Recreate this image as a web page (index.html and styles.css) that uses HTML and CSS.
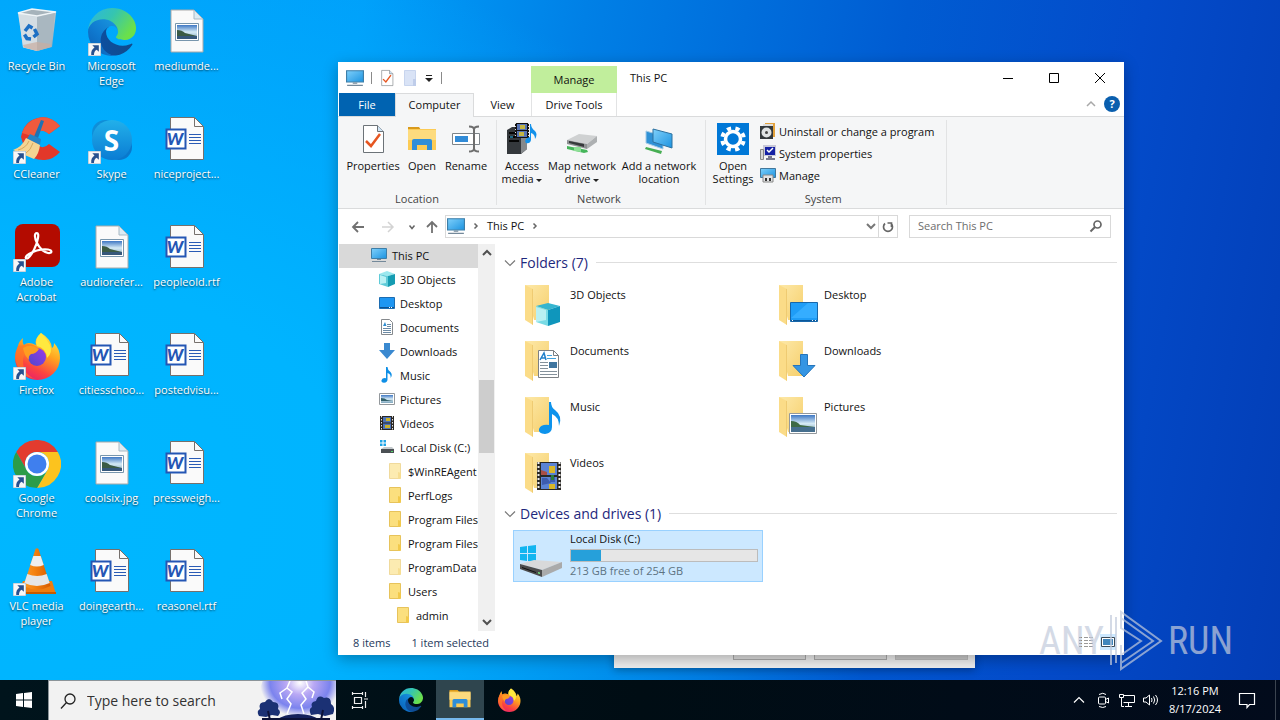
FILE: index.html
```html
<!DOCTYPE html>
<html lang="en">

<head>
  <meta charset="UTF-8">
  <meta name="viewport" content="width=device-width, initial-scale=1.0">
  <title>This PC</title>
  <link rel="stylesheet" href="styles.css">
</head>

<body>
  <!-- Icon definitions -->
  <svg class="defs" width="0" height="0" aria-hidden="true">
    <defs>
      <linearGradient id="gScreen" x1="0" y1="0" x2="1" y2="1">
        <stop offset="0" stop-color="#7fd0fb" /><stop offset="1" stop-color="#1c93e0" />
      </linearGradient>
      <linearGradient id="gFolder" x1="0" y1="0" x2="1" y2="1">
        <stop offset="0" stop-color="#fde9a9" /><stop offset="1" stop-color="#f6cf6c" />
      </linearGradient>
      <linearGradient id="gPhoto" x1="0" y1="0" x2="0" y2="1">
        <stop offset="0" stop-color="#3f78c4" /><stop offset=".5" stop-color="#d5eaf5" /><stop offset="1" stop-color="#7fa6bd" />
      </linearGradient>
      <linearGradient id="gEdge1" x1="0" y1="0" x2="1" y2="0">
        <stop offset="0" stop-color="#0c4fa0" /><stop offset="1" stop-color="#114a8b" />
      </linearGradient>
      <linearGradient id="gEdge2" x1="1" y1="0" x2=".2" y2="1">
        <stop offset="0" stop-color="#1b9de2" /><stop offset=".6" stop-color="#0f79cf" /><stop offset="1" stop-color="#0c62b8" />
      </linearGradient>
      <linearGradient id="gEdge3" x1="0" y1="0" x2="1" y2=".5">
        <stop offset="0" stop-color="#2bb5e3" /><stop offset=".5" stop-color="#35c5b0" /><stop offset="1" stop-color="#6be04a" />
      </linearGradient>
      <linearGradient id="gFox" x1=".8" y1="0" x2=".3" y2="1">
        <stop offset="0" stop-color="#fff04a" /><stop offset=".4" stop-color="#ffa51f" /><stop offset=".75" stop-color="#fb4440" /><stop offset="1" stop-color="#e81e6e" />
      </linearGradient>
      <linearGradient id="gGlobe" x1="0" y1="1" x2="1" y2="0">
        <stop offset="0" stop-color="#4d48c9" /><stop offset="1" stop-color="#9a3be8" />
      </linearGradient>
      <linearGradient id="gSkype" x1="0" y1="0" x2="0" y2="1">
        <stop offset="0" stop-color="#22b0ea" /><stop offset="1" stop-color="#0a7cd3" />
      </linearGradient>
      <linearGradient id="gCone" x1="0" y1="0" x2="1" y2="0">
        <stop offset="0" stop-color="#f99a2b" /><stop offset=".4" stop-color="#f5820f" /><stop offset="1" stop-color="#d65c00" />
      </linearGradient>
      <linearGradient id="gBin" x1="0" y1="0" x2="1" y2="1">
        <stop offset="0" stop-color="#dfe7ec" /><stop offset="1" stop-color="#97a8b3" />
      </linearGradient>
      <radialGradient id="gStorm" cx=".5" cy=".35" r=".5">
        <stop offset="0" stop-color="#ffffff" /><stop offset=".35" stop-color="#b9a8f4" /><stop offset=".75" stop-color="#7b83ee" /><stop offset="1" stop-color="#7b83ee" stop-opacity="0" />
      </radialGradient>
    </defs>

    <symbol id="shortcut" viewBox="0 0 12 12">
      <path d="M0 0h12v12H0z" fill="#f7f7f7" stroke="#9db6c9" />
      <path d="M4 2h6v6L8 6.200Q5.500 7.500 5.500 11H3Q2.500 6.500 6 4.200z" fill="#27508f" />
    </symbol>

    <symbol id="bin" viewBox="0 0 48 48">
      <path d="M5 5l14-3 24 3-4 34-15 4-14-4z" fill="url(#gBin)" />
      <path d="M5 5l19 3 19-4-24-3z" fill="#a6b3bb" stroke="#eff4f7" stroke-width="1.500" />
      <path d="M6 7l18 2v34l-14-3.500z" fill="#d4dde3" />
      <path d="M24 9l18-4-4 34-14 4z" fill="#a9b7c0" />
      <path d="M10 37l14-3 14 2-1 3-13 4-13-3.500z" fill="#c9aca0" opacity=".7" />
      <path d="M12 23l4-5 3.500 2M21.500 21l2.500 5-3.500 3M18 31l-4-.5-2.500-4" fill="none" stroke="#1c6fc4" stroke-width="3.500" />
    </symbol>

    <symbol id="edge" viewBox="0 0 256 256">
      <path fill="url(#gEdge1)" d="M231 190.500c-3.400 1.800-6.900 3.400-10.500 4.700a101.500 101.500 0 0 1-35.900 6.400c-47.300 0-88.500-32.500-88.500-74.300a31.500 31.500 0 0 1 16.400-27.300c-42.800 1.800-53.800 46.400-53.800 72.500 0 73.900 68.100 81.400 82.800 81.400 7.900 0 19.800-2.300 27-4.600l1.300-.4a128.300 128.300 0 0 0 66.600-52.800 4 4 0 0 0-5.400-5.600z" />
      <path fill="url(#gEdge2)" d="M105.700 241.400a79.200 79.200 0 0 1-22.700-21.300 80.700 80.700 0 0 1 29.500-120c3.200-1.500 8.500-4.100 15.600-4a32.400 32.400 0 0 1 25.700 13 31.900 31.900 0 0 1 6.300 18.700c0-.2 24.500-79.600-80-79.600-43.900 0-80 41.600-80 78.200a130.200 130.200 0 0 0 12.100 56 128 128 0 0 0 156.400 67 75.500 75.500 0 0 1-62.800-8z" />
      <path fill="url(#gEdge3)" d="M152.300 148.900c-.9 1-3.300 2.500-3.300 5.700 0 2.600 1.700 5.200 4.800 7.300 14.400 10 41.500 8.700 41.600 8.700a59.600 59.600 0 0 0 30.300-8.400 61.400 61.400 0 0 0 30.400-52.900c.3-22.400-8-37.300-11.300-43.900C223.500 23.900 177.700 0 128 0A128 128 0 0 0 0 126.200c.5-36.500 36.800-66 80-66 3.500 0 23.500.3 42 10 16.300 8.600 24.900 19 30.800 29.200 6.200 10.700 7.300 24.100 7.300 29.500 0 5.300-2.700 13.300-7.800 20z" />
    </symbol>

    <symbol id="imagefile" viewBox="0 0 48 48">
      <path d="M8 2h23l9 9v33H8z" fill="#fafafa" stroke="#a9a9a9" />
      <path d="M31 2v9h9z" fill="#dcebf3" stroke="#a9b9c4" />
      <path d="M12.500 15.500h23v17h-23z" fill="#fff" stroke="#7896ad" />
      <path d="M14 17h20v14H14z" fill="url(#gPhoto)" />
      <path d="M14 22q5 0 8 3l12 3H14z" fill="#3b5b45" />
      <path d="M14 28h20v3H14z" fill="#36577a" />
    </symbol>

    <symbol id="wordfile" viewBox="0 0 48 48">
      <path d="M7.500 1.500h24l9 9v33h-33z" fill="#fafafa" stroke="#76706c" />
      <path d="M31.500 1.500v9h9" fill="none" stroke="#76706c" />
      <path d="M26 18.500h12M26 21.500h12M26 24.500h12M26 27.500h12" stroke="#2a5bb5" />
      <path d="M3.500 13.500h19v19h-19z" fill="#fff" stroke="#2456b4" stroke-width="2" />
    </symbol>

    <symbol id="ccleaner" viewBox="0 0 48 48">
      <path d="M47 10Q37-1 25 2 11 5 8 21L12 34q8 11 20 10 9-1 15-8L36 28q-5 5-10 2-6-6-3-12 5-7 13 0z" fill="#e2382a" />
      <path d="M47 10Q37-1 25 2 13 5 9 17l13 4q5-11 14-3z" fill="#f05a3d" />
      <path d="M28 4l3 1-7 20-4-2z" fill="#1f72b4" />
      <path d="M17 18l11 5-1 6-13-6z" fill="#2684c6" />
      <path d="M13 22l14 7q-1 9-6 14L0 34q9-3 13-12z" fill="#f4d493" />
      <path d="M5 34q8-2 11-9M12 38q6-4 8-11" stroke="#d6a75d" fill="none" />
    </symbol>

    <symbol id="skype" viewBox="0 0 48 48">
      <circle cx="17" cy="17" r="13" fill="#0f8ed8" />
      <circle cx="31" cy="31" r="13" fill="#0a78cc" />
      <circle cx="24" cy="24" r="20" fill="url(#gSkype)" />
    </symbol>

    <symbol id="acrobat" viewBox="0 0 48 48">
      <rect x="2" y="0" width="45" height="43" rx="8" fill="#b30b00" />
      <path d="M24 9c-3 0-2.500 5 0 10 2.500 5 7 9 11 10 4 .8 5-3 0-3.500-6-.6-14 1.500-19 4.500-5 3-3.500 5.500-1 4 4-3 9-13 10-20 .6-3.500 0-5-1-5z" fill="none" stroke="#fff" stroke-width="2.200" />
    </symbol>

    <symbol id="firefox" viewBox="0 0 48 48">
      <path d="M28 1q-7 6-5 12-8-4-12 0-2-2-1-7-4 3-5 8-3 6-3 12a22.500 22 0 0 0 45 0q0-9-6-15 0 4-2 5Q38 7 28 1z" fill="url(#gFox)" />
      <path d="M5 14q-3 7-3 12 3 18 20 21-12-5-12-18 0-6 4-9h7q2-4 4-4-7-6-14-3z" fill="#ff7a22" opacity=".7" />
      <circle cx="24" cy="25" r="9" fill="url(#gGlobe)" />
      <path d="M10 16q8-5 16 1-3 5-8 5-3 2-2 6-5-5-6-12z" fill="#ff9d20" />
      <path d="M28 1q-7 6-4 13 9 2 10 12 6-5 3-13-3-6-9-12z" fill="#ffe93f" />
    </symbol>

    <symbol id="chrome" viewBox="0 0 48 48">
      <path d="M24 12h20.800A24 24 0 0 0 3.200 12l10.400 18A12 12 0 0 1 24 12z" fill="#e33b2e" />
      <path d="M44.800 12A24 24 0 0 1 24 48l10.400-18A12 12 0 0 0 24 12z" fill="#fcc31e" />
      <path d="M3.200 12A24 24 0 0 0 24 48l10.400-18a12 12 0 0 1-20.800 0z" fill="#2c9c48" />
      <circle cx="24" cy="24" r="12" fill="#fff" />
      <circle cx="24" cy="24" r="9.500" fill="#3f7fee" />
    </symbol>

    <symbol id="vlc" viewBox="0 0 48 48">
      <path d="M10 33h29l4 13H4z" fill="#ee7d10" />
      <path d="M4 44h39v2H4z" fill="#c75a00" />
      <path d="M22.500 1q1.500-1.500 3 0l12 37q-13 7-27 0z" fill="url(#gCone)" />
      <path d="M20.300 8h7.400l3 9q-7 3-13.500 0z" fill="#efefef" />
      <path d="M14.300 26q10 4 19.400 0l3 9q-13 6-25.300 0z" fill="#e6e6e6" />
    </symbol>

    <symbol id="pc" viewBox="0 0 16 16">
      <path d="M.5 1.500h15v10H.5z" fill="url(#gScreen)" stroke="#3d7ea8" />
      <path d="M6 12h4v1H6zM1 14h14v1H1z" fill="#74899a" />
    </symbol>

    <symbol id="cube" viewBox="0 0 16 16">
      <path d="M0 3l8-3 8 3-7 2z" fill="#9be8ee" /><path d="M0 3l9 2v11l-9-3z" fill="#5fcbd8" /><path d="M9 5l7-2v10l-7 3z" fill="#159cb2" />
      <path d="M1 4l6 2v6l-6 1z" fill="#baf1f4" />
    </symbol>

    <symbol id="desk" viewBox="0 0 16 16">
      <path d="M.5 2.500h15v11H.5z" fill="#1e96f2" stroke="#1c6cb1" /><path d="M1 12h14v1H1z" fill="#0d5190" /><path d="M10 12h1v1h-1zM12 12h1v1h-1z" fill="#fff" />
    </symbol>

    <symbol id="doc" viewBox="0 0 16 16">
      <path d="M2.500.5h8l3 3v12h-11z" fill="#fff" stroke="#85898d" />
      <path d="M4 9.500h8M4 11.500h8M4 13.500h8M8 5.500h4M8 7.500h4" stroke="#6b8aa5" /><path d="M4 7l2-4 1.500 4z" fill="#2a8bd0" />
    </symbol>

    <symbol id="down" viewBox="0 0 16 16">
      <path d="M5 0h6v7h5l-8 9-8-9h5z" fill="#3a89d0" />
    </symbol>

    <symbol id="note" viewBox="0 0 16 16">
      <path d="M7 0h1.500q0 3 3 5 2.500 3 0 6 .8-4-3-5v6.500q0 3-3.500 3.200-3-.3-2.500-2.500.8-2.500 4.500-2z" fill="#0e8fe6" />
    </symbol>

    <symbol id="pic" viewBox="0 0 16 16">
      <path d="M.5 2.500h15v11H.5z" fill="#fff" stroke="#93989c" /><path d="M2 4h12v8H2z" fill="url(#gPhoto)" /><path d="M2 7q4 0 6 2l6 1H2z" fill="#33606b" />
    </symbol>

    <symbol id="film" viewBox="0 0 16 16">
      <path d="M1 1h14v14H1z" fill="#2a2723" /><path d="M4 2h8v5.500H4zM4 8.500h8V14H4z" fill="#4b72b8" />
      <path d="M7 3h4v3H7zM6 10h5v3H6z" fill="#c9b12b" />
      <path d="M2.500 1v14M13.500 1v14" stroke="#e2e2e2" stroke-dasharray="1.500 1.500" />
    </symbol>

    <symbol id="disk" viewBox="0 0 16 16">
      <path d="M1 1h2.500v2.500H1zM4.500 1H7v2.500H4.500zM1 4.500h2.500V7H1zM4.500 4.500H7V7H4.500z" fill="#1ea4e6" />
      <path d="M2 10l3-2h8l2 2z" fill="#c4c9cc" /><path d="M2 10h13v4H2z" fill="#4b5054" /><path d="M12 12h2v1h-2z" fill="#57d86b" />
    </symbol>

    <symbol id="folder16" viewBox="0 0 16 16">
      <path d="M2.500.5h11v15h-11z" fill="#fbdf7e" stroke="#e7c35b" /><path d="M11 9l3 1v5l-3 1z" fill="#f2c94a" />
    </symbol>

    <symbol id="folderbig" viewBox="0 0 48 48">
      <path d="M7 4h24v35H16z" fill="url(#gFolder)" />
      <path d="M7 4l8 4v36l-8-5z" fill="#fbdc88" />
      <path d="M15 8v36l-1-1V8z" fill="#efcb72" />
    </symbol>

    <symbol id="explorer" viewBox="0 0 32 32">
      <path d="M2 4h11l2 3H2z" fill="#d99a1c" />
      <path d="M2 6h28v21H2z" fill="#fccb55" /><path d="M2 7h28v10H2z" fill="#fddb7e" />
      <path d="M6 18q0-2 2-2h16q2 0 2 2v9h-5v-5H11v5H6z" fill="#2f8ed8" />
    </symbol>

    <symbol id="check" viewBox="0 0 32 32">
      <path d="M6.500 2.500h14l6 6v21h-20z" fill="#fff" stroke="#6c7378" /><path d="M20.500 2.500v6h6" fill="#cfe4f5" stroke="#6c7378" />
      <path d="M9 18l5 5 9-12" fill="none" stroke="#e65621" stroke-width="2.500" />
    </symbol>
  </svg>

  <main class="desktop">
    <!-- Desktop icons -->
    <nav class="shortcuts" aria-label="Desktop icons">
      <a href="#" class="shortcut"><span class="pic"><svg><use href="#bin" /></svg></span>Recycle Bin</a>
      <a href="#" class="shortcut"><span class="pic"><svg><use href="#ccleaner" /></svg><svg class="arrow"><use href="#shortcut" /></svg></span>CCleaner</a>
      <a href="#" class="shortcut"><span class="pic"><svg><use href="#acrobat" /></svg><svg class="arrow"><use href="#shortcut" /></svg></span>Adobe Acrobat</a>
      <a href="#" class="shortcut"><span class="pic"><svg><use href="#firefox" /></svg><svg class="arrow"><use href="#shortcut" /></svg></span>Firefox</a>
      <a href="#" class="shortcut"><span class="pic"><svg><use href="#chrome" /></svg><svg class="arrow"><use href="#shortcut" /></svg></span>Google Chrome</a>
      <a href="#" class="shortcut"><span class="pic"><svg><use href="#vlc" /></svg><svg class="arrow"><use href="#shortcut" /></svg></span>VLC media player</a>

      <a href="#" class="shortcut"><span class="pic"><svg><use href="#edge" /></svg><svg class="arrow"><use href="#shortcut" /></svg></span>Microsoft Edge</a>
      <a href="#" class="shortcut"><span class="pic"><svg><use href="#skype" /></svg><b class="s-mark">S</b><svg class="arrow"><use href="#shortcut" /></svg></span>Skype</a>
      <a href="#" class="shortcut"><span class="pic"><svg><use href="#imagefile" /></svg></span>audiorefer...</a>
      <a href="#" class="shortcut"><span class="pic"><svg><use href="#wordfile" /></svg><b class="w-mark">W</b></span>citiesschoo...</a>
      <a href="#" class="shortcut"><span class="pic"><svg><use href="#imagefile" /></svg></span>coolsix.jpg</a>
      <a href="#" class="shortcut"><span class="pic"><svg><use href="#wordfile" /></svg><b class="w-mark">W</b></span>doingearth...</a>

      <a href="#" class="shortcut"><span class="pic"><svg><use href="#imagefile" /></svg></span>mediumde...</a>
      <a href="#" class="shortcut"><span class="pic"><svg><use href="#wordfile" /></svg><b class="w-mark">W</b></span>niceproject...</a>
      <a href="#" class="shortcut"><span class="pic"><svg><use href="#wordfile" /></svg><b class="w-mark">W</b></span>peopleold.rtf</a>
      <a href="#" class="shortcut"><span class="pic"><svg><use href="#wordfile" /></svg><b class="w-mark">W</b></span>postedvisu...</a>
      <a href="#" class="shortcut"><span class="pic"><svg><use href="#wordfile" /></svg><b class="w-mark">W</b></span>pressweigh...</a>
      <a href="#" class="shortcut"><span class="pic"><svg><use href="#wordfile" /></svg><b class="w-mark">W</b></span>reasonel.rtf</a>
    </nav>

    <!-- Dialog behind the explorer window -->
    <section class="dialog" aria-label="Dialog">
      <button type="button" aria-label="OK"></button>
      <button type="button" aria-label="Cancel"></button>
      <button type="button" aria-label="Apply" disabled></button>
    </section>

    <!-- Explorer window -->
    <section class="window" aria-label="This PC">
      <header class="titlebar">
        <div class="quick">
          <svg class="i18"><use href="#pc" /></svg>
          <i class="bar"></i>
          <button type="button" aria-label="Properties"><svg class="i18" viewBox="0 0 32 32"><use href="#check" /></svg></button>
          <button type="button" aria-label="New folder"><svg class="i18" viewBox="0 0 18 18"><path d="M3.500 1.500h11v15h-11z" fill="#d9e3f6" stroke="#c8d5ee" /><path d="M12 10h3v7h-3z" fill="#bfcdea" /></svg></button>
          <button type="button" aria-label="Customize"><svg class="i10" viewBox="0 0 10 10"><path d="M2 2.500h6" stroke="#222" /><path d="M1 5h8L5 9z" fill="#222" /></svg></button>
          <i class="bar"></i>
        </div>
        <div class="context">Manage</div>
        <h1>This PC</h1>
        <div class="controls">
          <button type="button" aria-label="Minimize"><svg class="i12" viewBox="0 0 12 12"><path d="M1 6.500h10" stroke="#000" /></svg></button>
          <button type="button" aria-label="Maximize"><svg class="i12" viewBox="0 0 12 12"><path d="M1.500 1.500h9v9h-9z" fill="none" stroke="#000" /></svg></button>
          <button type="button" aria-label="Close"><svg class="i12" viewBox="0 0 12 12"><path d="M1 1l10 10M11 1L1 11" stroke="#000" /></svg></button>
        </div>
      </header>

      <div class="tabs">
        <button type="button" class="tab file">File</button>
        <button type="button" class="tab active">Computer</button>
        <button type="button" class="tab view">View</button>
        <button type="button" class="tab tools">Drive Tools</button>
        <div class="tab-end">
          <button type="button" aria-label="Collapse ribbon"><svg class="i10" viewBox="0 0 10 10"><path d="M1 7l4-4 4 4" fill="none" stroke="#a8a8a8" stroke-width="1.500" /></svg></button>
          <button type="button" class="help" aria-label="Help">?</button>
        </div>
      </div>

      <div class="ribbon">
        <div class="group">
          <div class="tools-row">
            <button type="button" class="tool w56"><svg><use href="#check" /></svg>Properties</button>
            <button type="button" class="tool w42"><svg><use href="#explorer" /></svg>Open</button>
            <button type="button" class="tool w46"><svg viewBox="0 0 32 32"><path d="M2.500 10.500h27v11h-27z" fill="#fff" stroke="#7d8489" /><path d="M5 13h13v6H5z" fill="#318bd7" /><path d="M19 3.500q5 0 5 3v19q0 3-5 3M29 3.500q-5 0-5 3v19q0 3 5 3" fill="none" stroke="#6e6e6e" stroke-width="2" /></svg>Rename</button>
          </div>
          <h2>Location</h2>
        </div>

        <div class="group">
          <div class="tools-row">
            <button type="button" class="tool w46">
              <svg viewBox="0 0 32 32"><path d="M1 7l5-3h15v22l-6 5H1z" fill="#34383c" /><path d="M15 7l6-3v22l-6 5z" fill="#85898c" /><path d="M3 10h10M3 14h10M3 18h10" stroke="#050505" stroke-width="2" /><path d="M4 14h3" stroke="#30c8ff" /><path d="M9 0h14v15H9z" fill="#111" /><path d="M11 1h10v6H11zM11 8h10v6H11z" fill="#5774b4" /><path d="M14 2h5v4h-5zM13 9h5v4h-5z" fill="#c5b643" /><path d="M9.500 0v15M22.500 0v15" stroke="#ddd" stroke-dasharray="1 2" /><path d="M25 1q0 4 4 7 3 3 0 8 0-5-4-6v7q-1 4-5 3-2-2 1-5l3-1V1z" fill="#1391ea" /></svg>
              <span>Access<br>media <i class="caret"></i></span>
            </button>
            <button type="button" class="tool w74">
              <svg viewBox="0 0 32 32"><path d="M1 17l12-6 18 2-10 8z" fill="#cfd1d2" /><path d="M1 17l20 4v5L1 21z" fill="#8e9193" /><path d="M21 21l10-8v6l-10 7z" fill="#adb0b2" /><path d="M3 18l15 3v3L3 20z" fill="#36393b" /><path d="M1 23l20 4 1 2-4 1-17-4z" fill="#45b55a" /><path d="M8 24h7v5l-7-1z" fill="#8de096" /></svg>
              <span>Map network<br>drive <i class="caret"></i></span>
            </button>
            <button type="button" class="tool w80">
              <svg viewBox="0 0 32 32"><path d="M3 8l17 5v13L3 20z" fill="#2f91d6" stroke="#a3cbe6" /><path d="M10 6l19 5v14l-19-6z" fill="url(#gScreen)" stroke="#2d719f" /><path d="M3 24l16 4-1 3-16-5z" fill="#46ae53" /></svg>
              <span>Add a network<br>location</span>
            </button>
          </div>
          <h2>Network</h2>
        </div>

        <div class="group system">
          <div class="tools-row">
            <button type="button" class="tool w42">
              <svg viewBox="0 0 32 32"><path d="M0 0h32v32H0z" fill="#0078d7" /><circle cx="16" cy="16" r="7.500" fill="none" stroke="#fff" stroke-width="3.500" /><circle cx="16" cy="16" r="10.800" fill="none" stroke="#fff" stroke-width="4" stroke-dasharray="4.240 4.240" transform="rotate(11 16 16)" /></svg>
              <span>Open<br>Settings</span>
            </button>
            <ul class="links">
              <li><button type="button"><svg class="i16" viewBox="0 0 16 16"><path d="M5 0h10v14H5z" fill="#e4a23b" /><path d="M3 1h10v3H3z" fill="#ddd" /><path d="M0 3h13v13H0z" fill="#33383b" /><circle cx="6.500" cy="9.500" r="5" fill="#dfe2e3" /><circle cx="6.500" cy="9.500" r="1.500" fill="#444" /></svg>Uninstall or change a program</button></li>
              <li><button type="button"><svg class="i16" viewBox="0 0 16 16"><path d="M3 0h13v11H3z" fill="#c8c8d8" /><path d="M5 2h10v8H5z" fill="#1420a4" /><path d="M7 5l2 2 4-4" stroke="#fff" fill="none" stroke-width="1.500" /><path d="M.5 4.500h3v10h-3z" fill="#d5d5d5" stroke="#888" /><path d="M8 11h4v2h3v2H6v-2h2z" fill="#78788d" /></svg>System properties</button></li>
              <li><button type="button"><svg class="i16" viewBox="0 0 16 16"><path d="M.5 1.500h15v9H.5z" fill="url(#gScreen)" stroke="#41779b" /><path d="M3 8h10v7H3z" fill="#e2e3e4" stroke="#888" /><path d="M5 11h2v3H5zM9 11h2v3H9z" fill="#333" /></svg>Manage</button></li>
            </ul>
          </div>
          <h2>System</h2>
        </div>
      </div>

      <div class="address-row">
        <button type="button" class="back" aria-label="Back"><svg class="i14" viewBox="0 0 14 14"><path d="M13 7H2M7 2L2 7l5 5" fill="none" stroke="#717171" stroke-width="1.800" /></svg></button>
        <button type="button" class="forward" aria-label="Forward"><svg class="i14" viewBox="0 0 14 14"><path d="M1 7h11M7 2l5 5-5 5" fill="none" stroke="#d3d3d3" stroke-width="1.500" /></svg></button>
        <button type="button" class="recent" aria-label="Recent locations"><svg class="i8" viewBox="0 0 8 8"><path d="M1.500 2.500L4 5.500l2.500-3" fill="none" stroke="#666" stroke-width="1.500" /></svg></button>
        <button type="button" class="up" aria-label="Up"><svg class="i14" viewBox="0 0 14 14"><path d="M7 13V2M2 7l5-5 5 5" fill="none" stroke="#717171" stroke-width="1.800" /></svg></button>
        <div class="address">
          <svg class="i18"><use href="#pc" /></svg>
          <svg class="i8" viewBox="0 0 8 8"><path d="M2.500 1.500L5 4 2.500 6.500" fill="none" stroke="#666" stroke-width="1.500" /></svg>
          <a href="#">This PC</a>
          <svg class="i8" viewBox="0 0 8 8"><path d="M2.500 1.500L5 4 2.500 6.500" fill="none" stroke="#666" stroke-width="1.500" /></svg>
          <button type="button" class="history" aria-label="Previous locations"><svg class="i10" viewBox="0 0 10 10"><path d="M1 3l4 4 4-4" fill="none" stroke="#777" stroke-width="2" /></svg></button>
          <button type="button" class="refresh" aria-label="Refresh"><svg class="i12" viewBox="0 0 12 12"><path d="M9 2.500A4.500 4.500 0 1 1 3 2.500M9.500 6V2H5.500" fill="none" stroke="#666" stroke-width="1.700" /></svg></button>
        </div>
        <label class="search">
          <input type="text" placeholder="Search This PC" aria-label="Search This PC">
          <svg class="i14" viewBox="0 0 14 14"><circle cx="8.500" cy="5.500" r="3.500" fill="none" stroke="#666" stroke-width="1.700" /><path d="M6 8l-4.500 4.500" stroke="#666" stroke-width="2" /></svg>
        </label>
      </div>

      <div class="body">
        <nav class="tree" aria-label="Navigation pane">
          <a href="#" class="root selected"><svg><use href="#pc" /></svg>This PC</a>
          <a href="#"><svg><use href="#cube" /></svg>3D Objects</a>
          <a href="#"><svg><use href="#desk" /></svg>Desktop</a>
          <a href="#"><svg><use href="#doc" /></svg>Documents</a>
          <a href="#"><svg><use href="#down" /></svg>Downloads</a>
          <a href="#"><svg><use href="#note" /></svg>Music</a>
          <a href="#"><svg><use href="#pic" /></svg>Pictures</a>
          <a href="#"><svg><use href="#film" /></svg>Videos</a>
          <a href="#"><svg><use href="#disk" /></svg>Local Disk (C:)</a>
          <a href="#" class="sub dim"><svg><use href="#folder16" /></svg>$WinREAgent</a>
          <a href="#" class="sub"><svg><use href="#folder16" /></svg>PerfLogs</a>
          <a href="#" class="sub"><svg><use href="#folder16" /></svg>Program Files</a>
          <a href="#" class="sub"><svg><use href="#folder16" /></svg>Program Files</a>
          <a href="#" class="sub dim"><svg><use href="#folder16" /></svg>ProgramData</a>
          <a href="#" class="sub"><svg><use href="#folder16" /></svg>Users</a>
          <a href="#" class="leaf"><svg><use href="#folder16" /></svg>admin</a>
        </nav>
        <div class="scrollbar">
          <svg class="i10" viewBox="0 0 10 10"><path d="M1 7l4-4 4 4" fill="none" stroke="#505050" stroke-width="2" /></svg>
          <div class="track"><div class="thumb"></div></div>
          <svg class="i10" viewBox="0 0 10 10"><path d="M1 3l4 4 4-4" fill="none" stroke="#505050" stroke-width="2" /></svg>
        </div>

        <div class="content">
          <h3><svg class="i12" viewBox="0 0 12 12"><path d="M1 3.500l5 5 5-5" fill="none" stroke="#7a7a7a" stroke-width="1.200" /></svg>Folders (7)</h3>
          <div class="items">
            <a href="#" class="item">
              <svg viewBox="0 0 48 48"><use href="#folderbig" /><path d="M18 25l12-3 12 3-12 4z" fill="#35b5cf" /><path d="M18 25l12 4v16l-12-4z" fill="#79dbe5" /><path d="M42 25l-12 4v16l12-4z" fill="#0f96bc" /><path d="M18 26l10 3v10l-10 2z" fill="#b9f0f2" /></svg>
              <span>3D Objects</span>
            </a>
            <a href="#" class="item">
              <svg viewBox="0 0 48 48"><use href="#folderbig" /><path d="M18.500 21.500h27v19h-27z" fill="#1f9df7" stroke="#1767ab" /><path d="M19 37L36 22h9v15z" fill="#35adff" /><path d="M19 39h26v1H19z" fill="#0a5799" /><path d="M20 39h1v1h-1zM40 39h1v1h-1zM43 39h1v1h-1z" fill="#fff" /></svg>
              <span>Desktop</span>
            </a>
            <a href="#" class="item">
              <svg viewBox="0 0 48 48"><use href="#folderbig" /><path d="M20.500 13.500h15l5 5v22h-20z" fill="#fff" stroke="#7c8084" /><path d="M35.500 13.500v5h5" fill="none" stroke="#7c8084" /><path d="M22 23l4-7 2 7M23 21h4" fill="none" stroke="#2281cb" stroke-width="1.500" /><path d="M29 18.500h5M29 21.500h9" stroke="#41a2dd" /><path d="M22 25.500h8M22 28.500h8M22 31.500h8M22 34.500h17M22 37.500h17" stroke="#84919b" /><path d="M31 25h8v6h-8z" fill="#3f759f" /></svg>
              <span>Documents</span>
            </a>
            <a href="#" class="item">
              <svg viewBox="0 0 48 48"><use href="#folderbig" /><path d="M28.500 17.500h7v11h7.500L32 40 21 28.500h7.500z" fill="#3595e3" stroke="#2575bb" /></svg>
              <span>Downloads</span>
            </a>
            <a href="#" class="item">
              <svg viewBox="0 0 48 48"><use href="#folderbig" /><path d="M31 9h2q0 5 4 8 8 6 4 16 0-9-7-12v13q0 6-7 7-7-.5-6-5 2-5 10-4z" fill="#0d93ec" /></svg>
              <span>Music</span>
            </a>
            <a href="#" class="item">
              <svg viewBox="0 0 48 48"><use href="#folderbig" /><path d="M17.500 20.500h27v20h-27z" fill="#fff" stroke="#93989c" /><path d="M19 22h24v17H19z" fill="url(#gPhoto)" /><path d="M19 28q6 0 9 4l15 2v1H19z" fill="#3e6a45" /><path d="M19 34h24v5H19z" fill="#466f8e" /></svg>
              <span>Pictures</span>
            </a>
            <a href="#" class="item">
              <svg viewBox="0 0 48 48"><use href="#folderbig" /><path d="M19 13h24v28H19z" fill="#2b2926" /><path d="M23 14h16v12H23zM23 28h16v12H23z" fill="#5b83d4" /><path d="M31 17h6v7h-6zM31 35h6v5h-6z" fill="#d9b72a" /><path d="M23 21l6 2v3h-6z" fill="#a94e46" /><path d="M24 29h5l4 5-9 2zM32 28h5v5h-5z" fill="#3d5cae" /><path d="M33 26h3v5h-3z" fill="#2b7d3d" /><path d="M20.500 13v28M41.500 13v28" stroke="#eee" stroke-width="2" stroke-dasharray="2 2" /></svg>
              <span>Videos</span>
            </a>
          </div>

          <h3><svg class="i12" viewBox="0 0 12 12"><path d="M1 3.500l5 5 5-5" fill="none" stroke="#7a7a7a" stroke-width="1.200" /></svg>Devices and drives (1)</h3>
          <div class="items">
            <a href="#" class="item drive">
              <svg viewBox="0 0 48 48"><path d="M2 16l7-1v7H2zM10 15l8-1v8h-8zM2 23h7v7l-7-1zM10 23h8v8l-8-1z" fill="#12b5f0" /><path d="M2 33l14-4 28 2-20 8z" fill="#d8d9da" /><path d="M2 33l22 6v7L2 38z" fill="#4c4c4c" /><path d="M24 39l20-8v6l-20 9z" fill="#aaa" /><path d="M4 36l14 5v1L4 37z" fill="#111" /><path d="M20 41l2 .5v1.500l-2-.5z" fill="#70e37c" /></svg>
              <span>Local Disk (C:)
                <span class="meter"><span class="used"></span></span>
                <small>213 GB free of 254 GB</small>
              </span>
            </a>
          </div>
        </div>
      </div>

      <footer class="status">
        <span>8 items</span>
        <span>1 item selected</span>
        <div class="views">
          <button type="button" aria-label="Details view"><svg class="i16" viewBox="0 0 16 16"><path d="M1 3.500h3M1 6.500h3M1 9.500h3M1 12.500h3" stroke="#555" /><path d="M6 3.500h4M11 3.500h4M6 6.500h4M11 6.500h4M6 9.500h4M11 9.500h4M6 12.500h4M11 12.500h4" stroke="#999" /></svg></button>
          <button type="button" class="on" aria-label="Large icons view"><svg class="i16" viewBox="0 0 16 16"><path d="M1.500 3.500h13v9h-13z" fill="#fff" stroke="#3c4a57" /><path d="M3 5h10v6H3z" fill="#3f86bd" /></svg></button>
        </div>
      </footer>
    </section>

    <div class="watermark">
      <span>ANY</span>
      <svg viewBox="0 0 56 64"><path d="M3 6v50M8 8v46M13 36v24l40-28L13 3v16l20 13-20 14M13 9l32 23-32 22" fill="none" stroke="currentColor" stroke-width="2" /></svg>
      <span>RUN</span>
    </div>
  </main>

  <!-- Taskbar -->
  <footer class="taskbar">
    <button type="button" class="task" aria-label="Start"><svg class="i16" viewBox="0 0 16 16"><path d="M0 2l7-1v6.500H0zM8 1l8-1v7.500H8zM0 8.500h7V15l-7-1zM8 8.500h8V16l-8-1z" fill="#fff" /></svg></button>
    <label class="task-search">
      <svg class="i18" viewBox="0 0 18 18"><circle cx="11" cy="7" r="5" fill="none" stroke="#222" stroke-width="1.300" /><path d="M7.500 10.500L2 16.500" stroke="#222" stroke-width="1.300" /></svg>
      <input type="text" placeholder="Type here to search" aria-label="Type here to search">
      <svg class="storm" viewBox="0 0 80 39">
        <ellipse cx="44" cy="12" rx="40" ry="34" fill="url(#gStorm)" />
        <path d="M34 0l-3 7 5 4-5 7 4 5-4 10M31 7l-7 5 2 6M50 0l2 6-6 6 4 6-5 6 3 9M52 6l6 5-2 6" fill="none" stroke="#fff" stroke-width="1.500" />
        <path d="M20 39q8-6 22-6t22 6z" fill="#14225c" />
        <path d="M3 35q-3-5 1-7-2-7 5-7 4-6 8 0 7 0 5 7 4 3 0 7l-6-1-6 2zM55 34q-3-6 1-8-2-5 4-6 2-7 8-3 7-2 7 6 5 3 2 10l-8 2-7-2z" fill="#1b3174" />
        <path d="M12 30l2 9M67 29l-2 10M6 38h68" stroke="#0b1238" stroke-width="2" />
      </svg>
    </label>
    <button type="button" class="task" aria-label="Task view"><svg class="i18" viewBox="0 0 18 18"><path d="M3.500 6.500h7v6h-7zM1 2.500h11M1 16.500h11M1.500 1v3M11.500 1v3M1.500 15v3M11.500 15v3M14.500 1v5M14.500 10v7M13 8h4" fill="none" stroke="#eee" stroke-width="1.200" /></svg></button>
    <div class="apps">
      <button type="button" class="task" aria-label="Microsoft Edge"><svg class="i24"><use href="#edge" /></svg></button>
      <button type="button" class="task running" aria-label="File Explorer"><svg class="i24"><use href="#explorer" /></svg></button>
      <button type="button" class="task" aria-label="Firefox"><svg class="i24"><use href="#firefox" /></svg></button>
    </div>

    <div class="tray">
      <button type="button" aria-label="Show hidden icons"><svg class="i16" viewBox="0 0 16 16"><path d="M3 10.500l5-5 5 5" fill="none" stroke="#fff" stroke-width="1.200" /></svg></button>
      <button type="button" aria-label="Meet Now"><svg class="i16" viewBox="0 0 16 16"><rect x="3.500" y="5" width="7" height="7" rx="1" fill="none" stroke="#fff" /><path d="M10.500 7.500l3-1.500v5l-3-1.500M4 2.500Q8 0 11 2.500M4 14.500q4 2 7 0" fill="none" stroke="#fff" /></svg></button>
      <button type="button" aria-label="Network"><svg class="i16" viewBox="0 0 16 16"><path d="M4.500 3.500h11v7h-11M9.500 11v3M6 14.500h7M.5 2.500h4v3h-4zM2.500 6v8.500H5" fill="none" stroke="#fff" /></svg></button>
      <button type="button" aria-label="Volume"><svg class="i16" viewBox="0 0 16 16"><path d="M.5 6H3l3.500-3v10L3 10H.5zM8.500 6q1 2 0 4M10.500 4.500q2.500 3.500 0 7M12.500 3q4 5 0 10" fill="none" stroke="#fff" /></svg></button>
      <div class="clock"><span>12:16 PM</span><span>8/17/2024</span></div>
      <button type="button" class="notify" aria-label="Notifications"><svg class="i18" viewBox="0 0 18 18"><path d="M1.500 2.500h15v11h-5L9 16.500v-3H1.500z" fill="none" stroke="#fff" stroke-width="1.200" /></svg></button>
    </div>
  </footer>
</body>

</html>
```
FILE: styles.css
```css
* {
  box-sizing: border-box;
}

body {
  margin: 0;
  height: 100vh;
  display: flex;
  flex-direction: column;
  overflow: hidden;
  font-family: "Open Sans", "Noto Sans", sans-serif;
  font-size: 11px;
  line-height: 15px;
  color: #111;
}

button {
  border: none;
  background: none;
  padding: 0;
  font: inherit;
  color: inherit;
}

a {
  color: inherit;
  text-decoration: none;
}

h1,
h2,
h3,
ul {
  margin: 0;
  padding: 0;
  font-size: 11px;
  font-weight: 400;
  list-style: none;
}

svg {
  display: block;
  flex: none;
}

.defs {
  position: absolute;
}

.i8 { width: 8px; height: 8px; }
.i10 { width: 10px; height: 10px; }
.i12 { width: 12px; height: 12px; }
.i14 { width: 14px; height: 14px; }
.i16 { width: 16px; height: 16px; }
.i18 { width: 18px; height: 18px; }
.i24 { width: 24px; height: 24px; }

/* Desktop */
.desktop {
  position: relative;
  flex: 1;
  min-height: 0;
  background:
    radial-gradient(ellipse 900px 600px at 0% 75%, #00b7ff 0%, #00b4ff 40%, rgba(0, 165, 245, 0) 100%),
    linear-gradient(100deg, #00a4fb 0%, #009ffa 26%, #0080e6 42%, #005cd2 65%, #034bca 82%, #033db5 100%);
}

.shortcuts {
  display: grid;
  grid-auto-flow: column;
  grid-template-rows: repeat(6, 108px);
  grid-auto-columns: 75px;
  margin-left: -1px;
}

.shortcut {
  display: flex;
  flex-direction: column;
  align-items: center;
  padding: 8px 2px 0;
  color: #fff;
  text-align: center;
  text-shadow: 0 1px 2px rgba(0, 0, 0, 0.7);
}

.pic {
  position: relative;
  margin-bottom: 2px;
}

.pic svg {
  width: 48px;
  height: 48px;
}

.pic .arrow {
  position: absolute;
  left: 0;
  bottom: 0;
  width: 13px;
  height: 13px;
}

.w-mark,
.s-mark {
  position: absolute;
  text-shadow: none;
}

.w-mark {
  left: 2px;
  top: 13px;
  width: 21px;
  font: italic 900 17px/20px Lato, sans-serif;
  color: #2456b4;
}

.s-mark {
  left: 0;
  top: 8px;
  width: 48px;
  font: 700 28px/32px "Open Sans", sans-serif;
}

.dialog {
  position: absolute;
  left: 614px;
  top: 500px;
  width: 361px;
  height: 168px;
  padding: 8px 7px;
  display: flex;
  justify-content: flex-end;
  align-items: flex-end;
  gap: 8px;
  background: #f0f0f0;
  box-shadow: 0 2px 8px rgba(0, 0, 0, 0.3);
}

.dialog button {
  width: 73px;
  height: 22px;
  border: 1px solid #adadad;
  background: #e1e1e1;
}

.dialog button:disabled {
  border-color: #bfbfbf;
  background: #ccc;
}

/* Explorer window */
.window {
  position: absolute;
  left: 338px;
  top: 62px;
  width: 786px;
  height: 593px;
  display: flex;
  flex-direction: column;
  background: #fff;
  box-shadow: 0 4px 14px rgba(0, 0, 0, 0.3);
}

.titlebar {
  display: flex;
  height: 31px;
}

.quick {
  width: 193px;
  padding-left: 8px;
  display: flex;
  align-items: center;
  gap: 5px;
}

.bar {
  width: 1px;
  height: 12px;
  margin: 0 1px 0 2px;
  background: #8a8a8a;
}

.context {
  width: 86px;
  margin-top: 4px;
  line-height: 28px;
  text-align: center;
  background: #c1ee9c;
}

.titlebar h1 {
  flex: 1;
  padding-left: 13px;
  line-height: 31px;
}

.controls {
  display: flex;
  padding-right: 1px;
}

.controls button {
  width: 46px;
  display: flex;
  align-items: center;
  justify-content: center;
}

.tabs {
  display: flex;
  height: 24px;
  padding-left: 1px;
  border-bottom: 1px solid #dadbdc;
}

.tab {
  height: 23px;
  text-align: center;
}

.file {
  width: 56px;
  background: #0063b1;
  color: #fff;
}

.active {
  width: 79px;
  height: 24px;
  padding-bottom: 2px;
  border: 1px solid #dadbdc;
  border-bottom: none;
  background: #f5f6f7;
}

.view {
  width: 57px;
}

.tools {
  width: 86px;
  border: 1px solid #e2e3e4;
  border-width: 0 1px;
}

.tab-end {
  margin-left: auto;
  display: flex;
  align-items: center;
  gap: 8px;
  padding: 0 4px 2px 0;
}

.help {
  width: 16px;
  height: 16px;
  border-radius: 50%;
  background: #0a5fae;
  color: #fff;
  font-weight: 700;
}

/* Ribbon */
.ribbon {
  display: flex;
  height: 92px;
  padding: 3px 1px;
  border-bottom: 1px solid #dadbdc;
  background: #f5f6f7;
}

.group {
  display: flex;
  flex-direction: column;
  justify-content: space-between;
  padding: 0 7px 0 6px;
  border-right: 1px solid #e2e3e4;
}

.group + .group {
  padding: 0 6px 0 2px;
}

.group.system {
  padding: 0 12px 0 6px;
}

.group h2 {
  text-align: center;
  line-height: 13px;
  color: #444;
}

.tools-row {
  display: flex;
}

.tool {
  display: flex;
  flex-direction: column;
  align-items: center;
  gap: 4px;
  line-height: 13px;
  white-space: nowrap;
  text-align: center;
  padding-top: 3px;
}

.tool svg {
  width: 32px;
  height: 32px;
}

.w42 { width: 42px; }
.w46 { width: 46px; }
.w56 { width: 56px; }
.w74 { width: 74px; }
.w80 { width: 80px; }

.caret {
  display: inline-block;
  border: 3px solid transparent;
  border-top-color: #222;
  border-bottom-width: 0;
  vertical-align: middle;
}

.links {
  padding-left: 6px;
}

.links button {
  display: flex;
  align-items: center;
  gap: 3px;
  height: 22px;
  white-space: nowrap;
}

/* Address bar */
.address-row {
  display: flex;
  align-items: center;
  height: 35px;
  padding: 0 13px;
}

.back { margin-right: 16px; }
.forward { margin-right: 13px; }
.recent { margin-right: 9px; }
.up { margin-right: 6px; }

.address {
  flex: 1;
  display: flex;
  align-items: center;
  gap: 7px;
  height: 23px;
  padding: 0 0 2px 1px;
  border: 1px solid #d9d9d9;
}

.history {
  margin-left: auto;
}

.refresh {
  align-self: stretch;
  width: 19px;
  margin: 0 0 -2px -5px;
  padding-left: 3px;
  border-left: 1px solid #d9d9d9;
}

.search {
  display: flex;
  align-items: center;
  width: 202px;
  height: 23px;
  margin-left: 11px;
  padding: 0 7px 2px 8px;
  border: 1px solid #d9d9d9;
}

.search input {
  flex: 1;
  min-width: 0;
  border: none;
  padding: 0;
  font: inherit;
  background: none;
}

.search input::placeholder {
  color: #6d6d6d;
}

/* Panes */
.body {
  flex: 1;
  min-height: 0;
  display: flex;
  padding-left: 1px;
}

.tree {
  width: 139px;
  overflow: hidden;
}

.tree a {
  display: flex;
  align-items: center;
  gap: 5px;
  height: 24px;
  padding: 0 0 2px 40px;
  white-space: nowrap;
}

.tree svg {
  width: 16px;
  height: 16px;
}

.tree .root { padding-left: 32px; }
.tree .sub { padding-left: 48px; }
.tree .leaf { padding-left: 56px; }
.tree .selected { background: #d9d9d9; }
.tree .dim svg { opacity: 0.6; }

.scrollbar {
  display: flex;
  flex-direction: column;
  align-items: center;
  width: 17px;
  padding: 4px 0;
  background: #f0f0f0;
}

.track {
  flex: 1;
  width: 15px;
  padding-top: 122px;
}

.thumb {
  height: 73px;
  background: #cdcdcd;
}

.content {
  flex: 1;
  min-width: 0;
  padding: 4px 7px 0 9px;
}

.content h3 {
  display: flex;
  align-items: center;
  gap: 4px;
  height: 29px;
  margin-bottom: 2px;
  font-size: 14px;
  color: #1e287d;
}

.content h3::after {
  content: "";
  flex: 1;
  height: 1px;
  margin-left: 4px;
  background: #dedede;
}

.items {
  display: grid;
  grid-template-columns: repeat(auto-fill, 250px);
  gap: 4px;
  padding-left: 9px;
}

.item {
  display: flex;
  gap: 4px;
  height: 52px;
  padding: 2px 5px;
  line-height: 16px;
}

.item > svg {
  width: 48px;
  height: 48px;
}

.item > span {
  flex: 1;
  padding-top: 6px;
}

.drive {
  border: 1px solid #99d1ff;
  background: #cce8ff;
  padding: 0 4px;
}

.item.drive > span {
  padding-top: 0;
}

.meter {
  display: block;
  height: 13px;
  margin-top: 2px;
  border: 1px solid #bcbcbc;
  background: #e6e6e6;
}

.used {
  display: block;
  width: 16%;
  height: 100%;
  background: #26a0da;
}

.item small {
  display: block;
  margin-top: 1px;
  font-size: 11px;
  color: #5d7382;
}

.status {
  display: flex;
  align-items: center;
  gap: 21px;
  height: 24px;
  padding: 0 8px 2px 15px;
  color: #1e395b;
}

.views {
  margin-left: auto;
  display: flex;
  gap: 6px;
}

.on {
  background: #cce8ff;
}

.watermark {
  position: absolute;
  left: 1039px;
  top: 609px;
  display: flex;
  align-items: center;
  gap: 4px;
  font: 38px/64px "Liberation Sans Narrow", "Roboto Condensed", sans-serif;
  color: #c3cbdc;
  opacity: 0.7;
}

.watermark svg {
  width: 56px;
  height: 64px;
}

/* Taskbar */
.taskbar {
  display: flex;
  height: 40px;
  background: linear-gradient(90deg, #00141c 0%, #000d14 50%, #020b1c 100%);
  color: #fff;
}

.task {
  width: 48px;
  display: flex;
  align-items: center;
  justify-content: center;
}

.apps {
  display: flex;
  gap: 1px;
  margin-left: 3px;
}

.running {
  border-bottom: 2px solid #76b9ed;
  background: #2f454e;
}

.task-search {
  display: flex;
  align-items: center;
  width: 288px;
  padding-left: 10px;
  border: 1px solid #8b9499;
  border-right: none;
  border-bottom: none;
  background: #f2f2f2;
}

.task-search input {
  flex: 1;
  min-width: 0;
  margin-left: 10px;
  padding: 0;
  border: none;
  background: none;
  font: 14px/20px "Open Sans", sans-serif;
}

.task-search input::placeholder {
  color: #333;
}

.storm {
  width: 80px;
  height: 39px;
}

.tray {
  margin-left: auto;
  display: flex;
  align-items: center;
  gap: 8px;
  padding-right: 4px;
  border-right: 1px solid #3b4450;
  margin-right: 4px;
}

.clock {
  display: flex;
  flex-direction: column;
  width: 56px;
  line-height: 18px;
  text-align: center;
}

.notify {
  margin: 0 15px 0 7px;
}
```
